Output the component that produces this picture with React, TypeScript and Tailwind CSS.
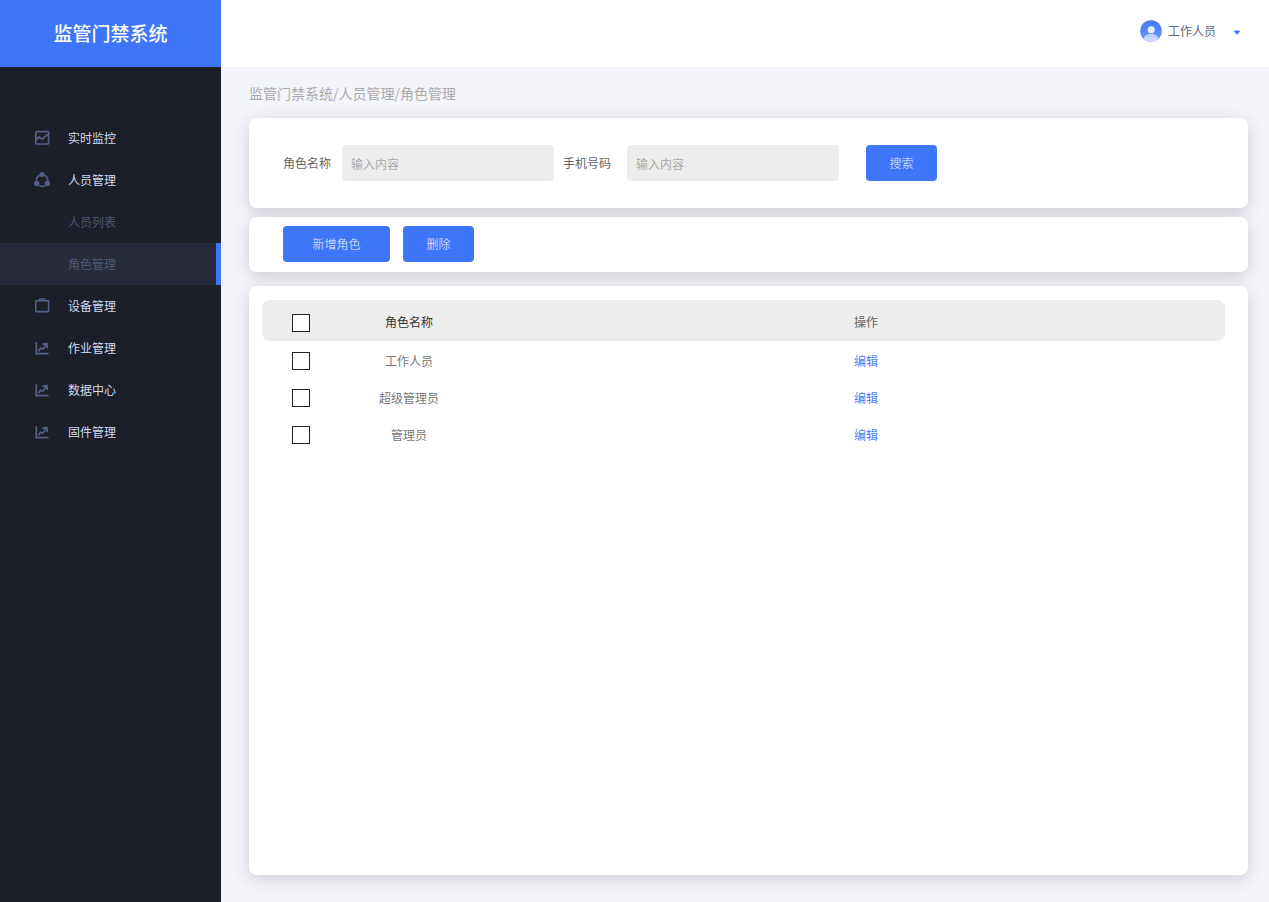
import type { ReactNode } from "react";

const iconClass = "h-4 w-4 shrink-0 text-[#50608a]";

function MonitorIcon() {
  return (
    <svg viewBox="0 0 16 16" className={iconClass} fill="none" stroke="currentColor" strokeWidth="1.7" strokeLinejoin="round" aria-hidden="true">
      <rect x="1.8" y="1.6" width="12.8" height="12.4" rx="0.8" />
      <path d="M2 9.8 5.2 7 8 9.2 13.8 4.4" />
    </svg>
  );
}

function PeopleIcon() {
  return (
    <svg viewBox="0 0 16 16" className={iconClass} aria-hidden="true">
      <g fill="none" stroke="currentColor" strokeWidth="1.6">
        <path d="M5.6 3.2A6 6 0 0 0 2.4 9" />
        <path d="M10.6 3.2A6 6 0 0 1 13.8 9" />
        <path d="M5 13.6a6 6 0 0 0 6.2 0" />
      </g>
      <g fill="currentColor">
        <circle cx="8.1" cy="2.5" r="2.5" />
        <circle cx="2.8" cy="11.4" r="2.7" />
        <circle cx="13.4" cy="11.4" r="2.7" />
      </g>
    </svg>
  );
}

function DeviceIcon() {
  return (
    <svg viewBox="0 0 16 16" className={iconClass} fill="none" stroke="currentColor" strokeWidth="1.6" strokeLinejoin="round" aria-hidden="true">
      <rect x="1.8" y="2.8" width="12.8" height="10.8" rx="0.5" />
      <path d="M4.6 2.6C5.4 1.1 6.4.8 8.2.8s2.800.3 3.600 1.800" />
    </svg>
  );
}

function ChartIcon() {
  return (
    <svg viewBox="0 0 16 16" className={iconClass} aria-hidden="true">
      <g fill="none" stroke="currentColor" strokeWidth="1.8">
        <path d="M2.300 2.200v11.500h12.200" />
        <path d="M4.600 11.400 6.400 8.300 8.800 9 11.800 5.200" />
      </g>
      <path d="M8.200 3.400 13.600 2.600 14.200 8 12.400 8.200 11.900 4.900 8.500 5.100Z" fill="currentColor" />
    </svg>
  );
}

type NavEntry = { label: string; icon?: ReactNode; child?: boolean; active?: boolean };

const navEntries: NavEntry[] = [
  { label: "实时监控", icon: <MonitorIcon /> },
  { label: "人员管理", icon: <PeopleIcon /> },
  { label: "人员列表", child: true },
  { label: "角色管理", child: true, active: true },
  { label: "设备管理", icon: <DeviceIcon /> },
  { label: "作业管理", icon: <ChartIcon /> },
  { label: "数据中心", icon: <ChartIcon /> },
  { label: "固件管理", icon: <ChartIcon /> },
];

function Sidebar() {
  return (
    <aside className="flex w-[221px] shrink-0 flex-col bg-[#1c1e28]">
      <h1 className="flex h-[67px] items-center justify-center bg-[#3f75f9] pb-[2px] text-[19px] font-medium text-white">
        监管门禁系统
      </h1>
      <nav className="pt-[50px]">
        <ul>
          {navEntries.map((entry) => (
            <li key={entry.label}>
              <a
                href="#"
                aria-current={entry.active ? "page" : undefined}
                className={
                  "flex h-[42px] items-center gap-[18px] border-r-[5px] pl-[34px] " +
                  (entry.active ? "border-[#3f75f9] bg-[#282b3b] " : "border-transparent ") +
                  (entry.child ? "text-[#4b5877]" : "text-[#cfdaf2]")
                }
              >
                {entry.icon ?? <span className="w-4" />}
                {entry.label}
              </a>
            </li>
          ))}
        </ul>
      </nav>
    </aside>
  );
}

function Avatar() {
  return (
    <svg viewBox="0 0 22 22" className="h-[22px] w-[22px]" aria-hidden="true">
      <defs>
        <clipPath id="avatar-clip">
          <circle cx="11" cy="11" r="10.8" />
        </clipPath>
        <linearGradient id="avatar-bg" x1="0" y1="0" x2="0" y2="1">
          <stop offset="0" stopColor="#4379f8" />
          <stop offset="1" stopColor="#6f9afa" />
        </linearGradient>
        <linearGradient id="avatar-body" x1="0" y1="0" x2="0" y2="1">
          <stop offset="0" stopColor="#b3caff" />
          <stop offset="1" stopColor="#dbe6ff" />
        </linearGradient>
      </defs>
      <g clipPath="url(#avatar-clip)">
        <rect width="22" height="22" fill="url(#avatar-bg)" />
        <ellipse cx="11" cy="18.6" rx="7.2" ry="4.8" fill="url(#avatar-body)" />
        <circle cx="11.2" cy="9.8" r="3.5" fill="#e6eeff" />
      </g>
    </svg>
  );
}

function Header() {
  return (
    <header className="flex h-[67px] items-start justify-end bg-white pt-5 pr-[29px]">
      <button type="button" className="flex items-center text-[#5c6580]">
        <Avatar />
        <span className="ml-[6px]">工作人员</span>
        <svg viewBox="0 0 6 5" className="mt-[2px] ml-[18px] h-[5px] w-[6px]" fill="#3f75f9" aria-hidden="true">
          <path d="M1 .5h4q1 0 .8 1L3.6 4.3q-.6.6-1.2 0L.2 1.5Q0 .5 1 .5Z" />
        </svg>
      </button>
    </header>
  );
}

const cardClass = "rounded-lg bg-white shadow-[0_4px_16px_rgba(30,32,40,0.18)]";
const buttonClass = "h-9 rounded bg-[#3f75f9] font-light text-[#f0f4ff]";
const inputClass =
  "h-9 w-[212px] rounded bg-[#ededed] px-[9px] text-[#555555] outline-none placeholder:text-[#aaaaaa]";
const checkboxClass =
  "block h-[18px] w-[18px] appearance-none border border-[#222222] bg-white checked:bg-[#3f75f9]";

function SearchCard() {
  return (
    <form className={cardClass + " flex items-center py-[27px] pl-[34px]"} onSubmit={(e) => e.preventDefault()}>
      <label htmlFor="role-name" className="mr-[11px] text-[#666666]">
        角色名称
      </label>
      <input id="role-name" type="text" placeholder="输入内容" className={inputClass} />
      <label htmlFor="phone" className="mr-4 ml-[9px] text-[#666666]">
        手机号码
      </label>
      <input id="phone" type="text" placeholder="输入内容" className={inputClass} />
      <button type="submit" className={buttonClass + " ml-[27px] w-[71px]"}>
        搜索
      </button>
    </form>
  );
}

const roles = ["工作人员", "超级管理员", "管理员"];

function RoleTable() {
  return (
    <table className="w-full table-fixed border-separate border-spacing-0">
      <thead>
        <tr className="h-[41px]">
          <th scope="col" className="w-[49px] rounded-l-lg bg-[#ededed] p-0 pt-1 pl-[30px]">
            <input type="checkbox" aria-label="全选" className={checkboxClass} />
          </th>
          <th scope="col" className="w-[196px] bg-[#ededed] p-0 pt-[2px] font-normal text-[#333333]">
            角色名称
          </th>
          <th scope="col" className="rounded-r-lg bg-[#ededed] p-0 pt-[2px] font-normal text-[#666666]">
            操作
          </th>
        </tr>
      </thead>
      <tbody>
        {roles.map((role) => (
          <tr key={role} className="h-[37px] text-center">
            <td className="p-0 pt-[2px] pl-[30px]">
              <input type="checkbox" aria-label={role} className={checkboxClass} />
            </td>
            <td className="p-0 pt-[3px] text-[#777777]">{role}</td>
            <td className="p-0 pt-[3px]">
              <a href="#" className="text-[#4a7ffa]">
                编辑
              </a>
            </td>
          </tr>
        ))}
      </tbody>
    </table>
  );
}

export default function App() {
  return (
    <div className="flex min-h-screen bg-[#f4f5fb] font-['Noto_Sans_CJK_SC',sans-serif] text-[12px] leading-[18px]">
      <Sidebar />
      <div className="flex min-w-0 flex-1 flex-col">
        <Header />
        <main className="flex flex-1 flex-col pt-4 pr-[21px] pb-[27px] pl-7">
          <p className="text-[14px] leading-5 text-[#aaaaaa]">监管门禁系统/人员管理/角色管理</p>
          <div className="mt-[15px] flex flex-1 flex-col">
            <SearchCard />
            <section className={cardClass + " mt-[9px] flex gap-[13px] pt-[9px] pb-[10px] pl-[34px]"}>
              <button type="button" className={buttonClass + " w-[107px]"}>
                新增角色
              </button>
              <button type="button" className={buttonClass + " w-[71px]"}>
                删除
              </button>
            </section>
            <section className={cardClass + " mt-[14px] flex-1 pt-[14px] pr-[23px] pb-6 pl-[13px]"}>
              <RoleTable />
            </section>
          </div>
        </main>
      </div>
    </div>
  );
}
